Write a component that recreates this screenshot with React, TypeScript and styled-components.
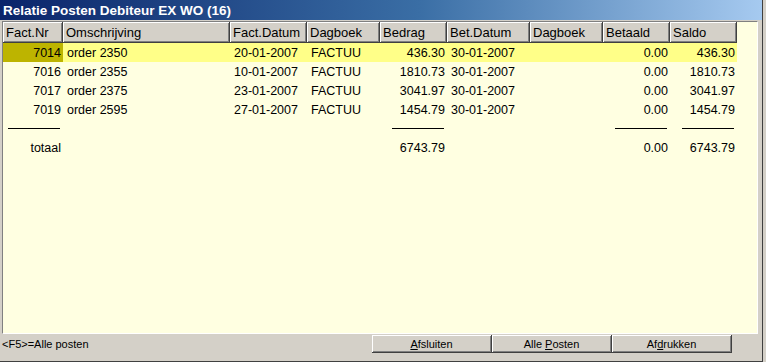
import styled, { createGlobalStyle, css } from "styled-components";

const GlobalStyle = createGlobalStyle`
  html, body {
    margin: 0;
    padding: 0;
    background: #d4d0c8;
  }
  body {
    font-family: "Liberation Sans", Arial, sans-serif;
    width: 766px;
    height: 362px;
    overflow: hidden;
  }
`;

const COLS = "60px 167px 77px 73px 67px 83px 73px 67px 67px";

const Window = styled.div`
  width: 762px;
  height: 361px;
  display: flex;
  flex-direction: column;
  background: #d4d0c8;
  border-right: 1px solid #404040;
  border-bottom: 1px solid #404040;
`;

const TitleBar = styled.div`
  height: 20px;
  display: flex;
  align-items: center;
  padding-left: 3px;
  background: linear-gradient(to right, #0a246a 0%, #3a6ea5 55%, #a6caf0 100%);
  color: #fff;
  font-weight: bold;
  font-size: 13.5px;
`;

const Panel = styled.div`
  margin: 1px 0 0 2px;
  width: 754px;
  height: 311px;
  background: #ffffe1;
  border-top: 1px solid #808080;
  border-left: 1px solid #808080;
  border-right: 1px solid #fff;
  border-bottom: 1px solid #fff;
  font-size: 12px;
  color: #000;
`;

const HeaderRow = styled.div`
  display: grid;
  grid-template-columns: ${COLS};
  height: 21px;
`;

const HeaderCell = styled.div`
  background: #d4d0c8;
  border-right: 1px solid #404040;
  border-bottom: 1px solid #404040;
  box-shadow: inset 1px 1px #fff, inset -1px -1px #808080;
  padding-left: 3px;
  display: flex;
  align-items: center;
  font-size: 13px;
  white-space: nowrap;
  overflow: hidden;
`;

const Row = styled.div<{ $active?: boolean }>`
  display: grid;
  grid-template-columns: ${COLS};
  width: fit-content;
  height: 19px;
  ${(p) =>
    p.$active &&
    css`
      background: #ffff88;
    `}
`;

const Cell = styled.div<{ $right?: boolean; $focus?: boolean }>`
  display: flex;
  align-items: center;
  justify-content: ${(p) => (p.$right ? "flex-end" : "flex-start")};
  padding: ${(p) => (p.$right ? "0 2px 0 0" : "0 0 0 4px")};
  white-space: nowrap;
  font-size: 12.5px;
  ${(p) =>
    p.$focus &&
    css`
      background: #bdb400;
    `}
`;

const RuleCell = styled.div`
  display: flex;
  align-items: center;
  justify-content: flex-end;
  padding-right: 3px;
`;

const Rule = styled.div`
  width: 52px;
  height: 1px;
  background: #000;
`;

const StatusBar = styled.div`
  display: flex;
  align-items: center;
  height: 18px;
  margin-top: 1px;
  font-size: 11px;
`;

const StatusText = styled.div`
  width: 370px;
  padding-left: 2px;
`;

const ButtonRow = styled.div`
  display: flex;
`;

const Button = styled.button`
  width: 120px;
  height: 18px;
  padding: 0;
  background: #d4d0c8;
  border: none;
  border-right: 1px solid #404040;
  border-bottom: 1px solid #404040;
  box-shadow: inset 1px 1px #fff, inset -1px -1px #808080;
  font-family: "Liberation Sans", Arial, sans-serif;
  font-size: 11px;
  color: #000;
  u {
    text-decoration: underline;
  }
`;

type Post = {
  nr: string;
  oms: string;
  datum: string;
  dagboek: string;
  bedrag: string;
  betDatum: string;
  betaald: string;
  saldo: string;
};

const posts: Post[] = [
  { nr: "7014", oms: "order 2350", datum: "20-01-2007", dagboek: "FACTUU", bedrag: "436.30", betDatum: "30-01-2007", betaald: "0.00", saldo: "436.30" },
  { nr: "7016", oms: "order 2355", datum: "10-01-2007", dagboek: "FACTUU", bedrag: "1810.73", betDatum: "30-01-2007", betaald: "0.00", saldo: "1810.73" },
  { nr: "7017", oms: "order 2375", datum: "23-01-2007", dagboek: "FACTUU", bedrag: "3041.97", betDatum: "30-01-2007", betaald: "0.00", saldo: "3041.97" },
  { nr: "7019", oms: "order 2595", datum: "27-01-2007", dagboek: "FACTUU", bedrag: "1454.79", betDatum: "30-01-2007", betaald: "0.00", saldo: "1454.79" },
];

const headers = ["Fact.Nr", "Omschrijving", "Fact.Datum", "Dagboek", "Bedrag", "Bet.Datum", "Dagboek", "Betaald", "Saldo"];

function App() {
  return (
    <>
      <GlobalStyle />
      <Window>
        <TitleBar>Relatie Posten Debiteur EX WO (16)</TitleBar>
        <Panel>
          <HeaderRow>
            {headers.map((h, i) => (
              <HeaderCell key={i}>{h}</HeaderCell>
            ))}
          </HeaderRow>
          {posts.map((p, i) => (
            <Row key={p.nr} $active={i === 0}>
              <Cell $right $focus={i === 0}>{p.nr}</Cell>
              <Cell>{p.oms}</Cell>
              <Cell>{p.datum}</Cell>
              <Cell>{p.dagboek}</Cell>
              <Cell $right>{p.bedrag}</Cell>
              <Cell>{p.betDatum}</Cell>
              <Cell />
              <Cell $right>{p.betaald}</Cell>
              <Cell $right>{p.saldo}</Cell>
            </Row>
          ))}
          <Row>
            <RuleCell><Rule /></RuleCell>
            <div />
            <div />
            <div />
            <RuleCell><Rule /></RuleCell>
            <div />
            <div />
            <RuleCell><Rule /></RuleCell>
            <RuleCell><Rule /></RuleCell>
          </Row>
          <Row>
            <Cell $right>totaal</Cell>
            <Cell />
            <Cell />
            <Cell />
            <Cell $right>6743.79</Cell>
            <Cell />
            <Cell />
            <Cell $right>0.00</Cell>
            <Cell $right>6743.79</Cell>
          </Row>
        </Panel>
        <StatusBar>
          <StatusText>&lt;F5&gt;=Alle posten</StatusText>
          <ButtonRow>
            <Button><u>A</u>fsluiten</Button>
            <Button>Alle <u>P</u>osten</Button>
            <Button>Af<u>d</u>rukken</Button>
          </ButtonRow>
        </StatusBar>
      </Window>
    </>
  );
}

export default App;
